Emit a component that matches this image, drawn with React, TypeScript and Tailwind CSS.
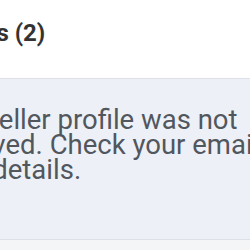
export default function App() {
  return (
    <div className="w-[250px] h-[250px] overflow-hidden bg-white font-['Roboto',Arial,sans-serif]">
      <div className="ml-[-121px] w-[560px]">
        <h2 className="ml-[-9px] pt-[19px] pb-[30px] text-[24px] leading-[29px] font-bold text-[#333]">
          Notifications (2)
        </h2>
        <div className="border-t border-b border-[#dde1e7] bg-[#edf1f7] pl-[43px] pt-[28px] pb-[57px]">
          <p className="w-[400px] text-[27.5px] leading-[25px] text-[#52575e]">
            Your seller profile was not approved. Check your email for more details.
          </p>
        </div>
        <div className="h-[40px] bg-[#f4f5f7]" />
      </div>
    </div>
  );
}
